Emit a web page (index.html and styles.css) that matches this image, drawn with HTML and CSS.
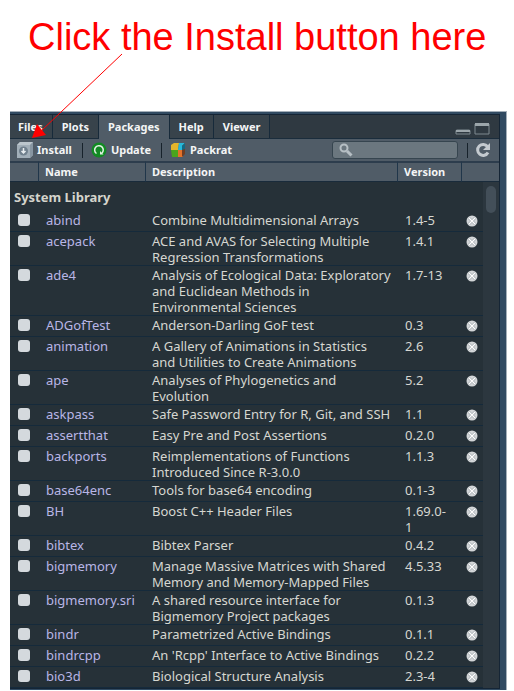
FILE: index.html
```html
<!DOCTYPE html>
<html lang="en">
<head>
<meta charset="utf-8">
<title>Packages</title>
<link rel="stylesheet" href="styles.css">
</head>
<body>
<h1 class="callout">Click the Install button here</h1>
<svg class="arrow" viewBox="0 0 92 88" aria-hidden="true"><path d="M90 1 8 79" stroke="#f00" stroke-width="1"/><path d="M0 85 5 71 14 82Z" fill="#f00"/></svg>
<main class="frame">
<section class="panel">
<nav class="tabs">
<button class="tab">Files</button><button class="tab">Plots</button><button class="tab active">Packages</button><button class="tab">Help</button><button class="tab">Viewer</button>
<div class="window-buttons">
<button class="icon-button" aria-label="Minimize"><svg width="16" height="14" viewBox="0 0 16 14"><path d="M1 12V9Q1 8 2 8H14Q15 8 15 9V12Z" fill="#2f3941" stroke="#7e8a90"/><path d="M1 9H15" stroke="#9ba5aa" stroke-width="2"/></svg></button>
<button class="icon-button" aria-label="Maximize"><svg width="16" height="14" viewBox="0 0 16 14"><path d="M1 2H15V12H1Z" fill="#2f3941" stroke="#7e8a90"/><path d="M1 2.5H15" stroke="#9ba5aa" stroke-width="3"/></svg></button>
</div>
</nav>
<div class="toolbar">
<button class="tool"><svg width="16" height="16" viewBox="0 0 16 16"><path d="M0 3 3 0H16V13L13 16H0Z" fill="#a2afb9"/><path d="M0 3 3 0H16L13 3Z" fill="#bcc6cd"/><path d="M13 3 16 0V13L13 16Z" fill="#8796a2"/><circle cx="6.500" cy="9" r="4.500" fill="#71818e"/><path d="M6.500 6V11M4.500 9 6.500 11 8.500 9" fill="none" stroke="#e9edf0" stroke-width="1.500"/></svg>Install</button>
<span class="divider"></span>
<button class="tool"><svg width="16" height="16" viewBox="0 0 16 16"><circle cx="8" cy="8" r="7.500" fill="#128a24"/><path d="M5.500 11.500A4.300 4.300 0 1 1 10.800 11.200" fill="none" stroke="#e4f2e5" stroke-width="1.500"/><path d="M9 9V12.500H12.500Z" fill="#e4f2e5"/></svg>Update</button>
<span class="divider"></span>
<button class="tool"><svg width="16" height="16" viewBox="0 0 16 16"><path d="M1 3 4 1H9L8 8H1Z" fill="#e4b52c"/><path d="M9 1H15L13 8H8Z" fill="#27b8d8"/><path d="M1 8H8V15H2Z" fill="#4aa51d"/><path d="M8 8H13V15H8Z" fill="#e5732a"/><path d="M15 1V12L12 15V4Z" fill="#713e22"/><path d="M15 1V7L12 8V4Z" fill="#126985"/></svg>Packrat</button>
<label class="search"><svg width="14" height="14" viewBox="0 0 14 14"><circle cx="5" cy="5" r="3.500" fill="none" stroke="#b6bfc4" stroke-width="2"/><path d="M8 8 12.500 12.500" stroke="#b6bfc4" stroke-width="3"/></svg><input type="text" aria-label="Search packages"></label>
<span class="divider refresh-divider"></span>
<button class="icon-button" aria-label="Refresh"><svg width="16" height="16" viewBox="0 0 16 16"><path d="M12.500 4.500A5.500 5.500 0 1 0 13 10.500" fill="none" stroke="#c4cacf" stroke-width="3"/><path d="M15 1V8H8Z" fill="#c4cacf"/></svg></button>
</div>
<div class="library">
<table>
<colgroup><col class="col-check"><col class="col-name"><col><col class="col-version"><col class="col-remove"></colgroup>
<thead><tr><th></th><th>Name</th><th>Description</th><th>Version</th><th></th></tr></thead>
<tbody id="packages"><tr class="group"><th colspan="5">System Library</th></tr></tbody>
</table>
<div class="track"><div class="thumb"></div></div>
</div>
</section>
</main>
<script src="packages.js"></script>
</body>
</html>
```
FILE: styles.css
```css
* { box-sizing: border-box; }
body { margin: 0; background: #fff; font: 13px/16px "Noto Sans", sans-serif; }
button { border: 0; background: none; padding: 0; font: inherit; color: inherit; }
svg { display: block; }
.callout { margin: 0; padding: 16px 0 0 28px; height: 111px; font: 38px/42px "Liberation Sans", sans-serif; color: #f00; white-space: nowrap; }
.arrow { position: absolute; left: 32px; top: 53px; width: 92px; height: 88px; }
.frame { margin: 0 7px 0 10px; padding: 2px 6px 1px 0; background: #314a61; border-top: 1px solid #a4afb9; border-right: 1px solid #a4afb9; }
.panel { border: 1px solid #152535; border-left: 0; background: #263138; color: #f4f5f5; }
.tabs { display: flex; height: 24px; background: #2f3941; border-bottom: 1px solid #1b2d3c; font-size: 11px; font-weight: 700; }
.tab { padding: 0 9px 0 8px; background: #38434b; border-right: 1px solid #172a3a; }
.tab + .tab { padding-left: 9px; }
.tab.active { background: #505c67; height: 24px; }
.window-buttons { margin-left: auto; padding: 5px 9px 0 0; display: flex; gap: 3px; }
.toolbar { display: flex; align-items: center; height: 22px; padding: 0 8px 0 7px; background: #505c67; font-size: 11px; font-weight: 700; }
.tool { display: flex; align-items: center; gap: 4px; }
.divider { width: 1px; height: 15px; margin: 0 8px 0 10px; background: #17222b; }
.search { display: flex; align-items: center; gap: 3px; margin-left: auto; width: 126px; height: 18px; padding-left: 6px; background: #6b777f; border: 1px solid #36454f; border-radius: 3px; }
.search input { flex: 1; min-width: 0; border: 0; background: none; color: #fff; font: inherit; outline: 0; }
.refresh-divider { margin: 0 7px 0 9px; }
.library { position: relative; }
table { width: 100%; table-layout: fixed; border-collapse: separate; border-spacing: 0; }
.col-check { width: 29px; }
.col-name { width: 107px; }
.col-version { width: 64px; }
.col-remove { width: 37px; }
th { text-align: left; padding: 0; }
thead th { height: 21px; background: #505c67; border-top: 2px solid #2d3d4d; border-bottom: 1px solid #192b3b; border-right: 1px solid #20364a; padding-left: 6px; font-size: 11px; font-weight: 700; }
thead th:last-child { border-right: 0; }
.group th { height: 29px; padding: 0 0 0 4px; font-weight: 700; color: #d4d4cc; }
td { height: 21px; padding: 1px 0 0 7px; border-bottom: 1px solid #152a3b; vertical-align: top; color: #d6d7d1; }
td:nth-child(3) { padding: 1px 6px 0 6px; }
td:nth-child(4) { padding-right: 12px; overflow-wrap: anywhere; }
td a { color: #b9b6e6; text-decoration: none; }
td input { appearance: none; display: block; width: 12px; height: 12px; margin: 2px 0 0 1px; border-radius: 3px; background: #d4d9dd; }
.remove { display: block; margin: 3px 0 0 -3px; }
.track { position: absolute; top: 21px; right: 0; bottom: 0; width: 16px; padding: 4px 3px; background: #2c373f; }
.thumb { height: 27px; border-radius: 5px; background: #434f59; }
```
FILE: packages.js
```js
const packages = [
  ["abind", "Combine Multidimensional Arrays", "1.4-5"],
  ["acepack", "ACE and AVAS for Selecting Multiple Regression Transformations", "1.4.1"],
  ["ade4", "Analysis of Ecological Data: Exploratory and Euclidean Methods in Environmental Sciences", "1.7-13"],
  ["ADGofTest", "Anderson-Darling GoF test", "0.3"],
  ["animation", "A Gallery of Animations in Statistics and Utilities to Create Animations", "2.6"],
  ["ape", "Analyses of Phylogenetics and Evolution", "5.2"],
  ["askpass", "Safe Password Entry for R, Git, and SSH", "1.1"],
  ["assertthat", "Easy Pre and Post Assertions", "0.2.0"],
  ["backports", "Reimplementations of Functions Introduced Since R-3.0.0", "1.1.3"],
  ["base64enc", "Tools for base64 encoding", "0.1-3"],
  ["BH", "Boost C++ Header Files", "1.69.0-1"],
  ["bibtex", "Bibtex Parser", "0.4.2"],
  ["bigmemory", "Manage Massive Matrices with Shared Memory and Memory-Mapped Files", "4.5.33"],
  ["bigmemory.sri", "A shared resource interface for Bigmemory Project packages", "0.1.3"],
  ["bindr", "Parametrized Active Bindings", "0.1.1"],
  ["bindrcpp", "An 'Rcpp' Interface to Active Bindings", "0.2.2"],
  ["bio3d", "Biological Structure Analysis", "2.3-4"]
];
document.getElementById("packages").insertAdjacentHTML("beforeend", packages.map(([name, description, version]) => `
<tr><td><input type="checkbox" aria-label="Load ${name}"></td><td><a href="#${name}">${name}</a></td><td>${description}</td><td>${version}</td>
<td><button class="remove" aria-label="Remove ${name}"><svg width="12" height="12" viewBox="0 0 12 12"><circle cx="6" cy="6" r="5.5" fill="#d3d6d8"/><path d="M3 3 9 9M9 3 3 9" stroke="#a3abb0" stroke-width="2.500"/><path d="M3 3 9 9M9 3 3 9" stroke="#fff" stroke-width="1.200"/></svg></button></td></tr>`).join(""));
```
